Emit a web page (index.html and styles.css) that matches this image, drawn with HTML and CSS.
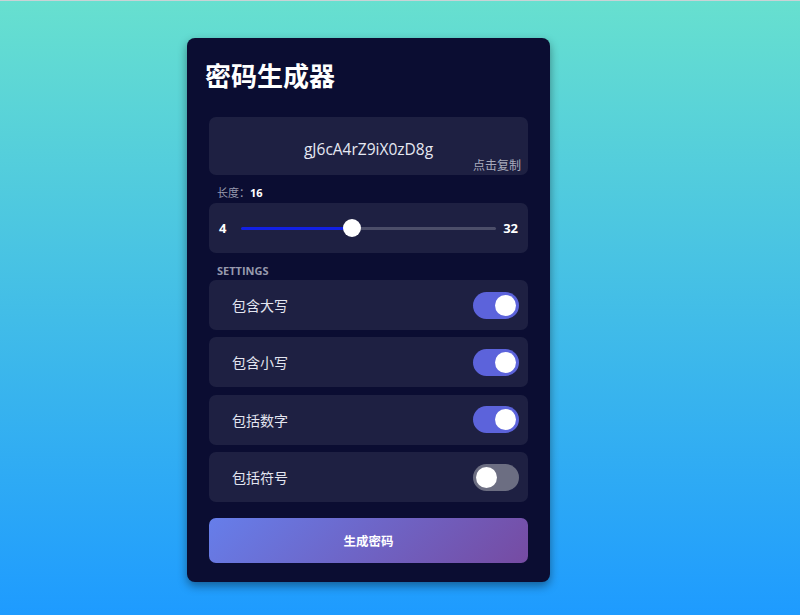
FILE: index.html
```html
<!DOCTYPE html>
<html lang="zh-CN">
<head>
  <meta charset="UTF-8" />
  <meta name="viewport" content="width=device-width, initial-scale=1.0"/>
  <title>密码生成器</title>
  <link rel="stylesheet" href="styles.css">
</head>
<body>
  <div class="page">
    <div class="card">
      <h1>密码生成器</h1>

      <div class="result">
        <span id="password">gJ6cA4rZ9iX0zD8g</span>
        <span class="copy">点击复制</span>
      </div>

      <div class="label">长度：<b id="lenValue">16</b></div>
      <div class="panel slider">
        <span class="min">4</span>
        <input type="range" id="length" min="4" max="32" value="16" style="--fill: 43%">
        <span class="max">32</span>
      </div>

      <div class="label caps">SETTINGS</div>
      <div class="options">
        <div class="panel option">
          <span>包含大写</span>
          <label class="switch"><input type="checkbox" checked><i></i></label>
        </div>
        <div class="panel option">
          <span>包含小写</span>
          <label class="switch"><input type="checkbox" checked><i></i></label>
        </div>
        <div class="panel option">
          <span>包括数字</span>
          <label class="switch"><input type="checkbox" checked><i></i></label>
        </div>
        <div class="panel option">
          <span>包括符号</span>
          <label class="switch"><input type="checkbox"><i></i></label>
        </div>
      </div>

      <button class="generate">生成密码</button>
    </div>
  </div>
</body>
</html>
```

FILE: styles.css
```css
* {
  box-sizing: border-box;
}
body {
  margin: 0;
  height: 615px;
  border-top: 1px solid #c9d3d6;
  background: linear-gradient(to bottom, #67e0cf, #1e9bff);
  font-family: "Noto Sans CJK SC", "Noto Sans", sans-serif;
  color: #fff;
  overflow: hidden;
}
.page {
  padding: 37px 0 0 187px;
}
.card {
  width: 363px;
  padding: 22px 22px 19px;
  background: #0b0d32;
  border-radius: 8px;
  box-shadow: 0 4px 10px rgba(0, 0, 0, 0.4);
}
h1 {
  margin: -1px 0 26px -4px;
  font-size: 26px;
  line-height: 32px;
  font-weight: 700;
}
.panel {
  background: #1e2042;
  border-radius: 7px;
}
.result {
  position: relative;
  height: 58px;
  padding-top: 5px;
  display: flex;
  align-items: center;
  justify-content: center;
  background: #1e2042;
  border-radius: 7px;
  font-family: "Open Sans", sans-serif;
  font-size: 15.5px;
  color: #e6e8f2;
  cursor: pointer;
}
.copy {
  position: absolute;
  right: 7px;
  bottom: 2px;
  font-family: "Noto Sans CJK SC", sans-serif;
  font-size: 12px;
  color: #a9abbc;
}
.label {
  margin: 9px 0 2px 8px;
  font-size: 11px;
  line-height: 16px;
  color: #9799ad;
}
.label b {
  color: #fff;
  font-family: "Open Sans", sans-serif;
}
.caps {
  margin-top: 10px;
  margin-bottom: 1px;
  font-family: "Open Sans", sans-serif;
  font-weight: 700;
}
.slider {
  height: 50px;
  display: flex;
  align-items: center;
  padding: 0 10px;
  font-family: "Open Sans", sans-serif;
  font-size: 13px;
  font-weight: 700;
}
.slider .min {
  margin-right: 15px;
}
.slider .max {
  margin-left: 7px;
}
input[type="range"] {
  -webkit-appearance: none;
  appearance: none;
  flex: 1;
  height: 18px;
  margin: 0;
  background: transparent;
}
input[type="range"]::-webkit-slider-runnable-track {
  height: 3px;
  border-radius: 2px;
  background: linear-gradient(to right, #1220e4 var(--fill), #4c4e69 var(--fill));
}
input[type="range"]::-webkit-slider-thumb {
  -webkit-appearance: none;
  width: 18px;
  height: 18px;
  margin-top: -7.5px;
  border-radius: 50%;
  background: #fff;
}
.options {
  display: flex;
  flex-direction: column;
  gap: 7.4px;
}
.option {
  height: 50px;
  display: flex;
  align-items: center;
  justify-content: space-between;
  padding: 0 9px 0 23px;
  font-size: 14px;
  color: #e3e5f0;
}
.switch {
  position: relative;
  width: 46px;
  height: 27px;
}
.switch input {
  display: none;
}
.switch i {
  position: absolute;
  inset: 0;
  border-radius: 14px;
  background: #6c6e82;
}
.switch i::after {
  content: "";
  position: absolute;
  top: 3px;
  left: 3px;
  width: 21px;
  height: 21px;
  border-radius: 50%;
  background: #fff;
}
.switch input:checked + i {
  background: #5c63db;
}
.switch input:checked + i::after {
  left: 22px;
}
.generate {
  display: block;
  width: 100%;
  height: 45px;
  margin-top: 16px;
  border: none;
  border-radius: 7px;
  background: linear-gradient(135deg, #667eea, #764ba2);
  color: #fff;
  font-family: "Noto Sans CJK SC", sans-serif;
  font-size: 12.5px;
  font-weight: 700;
  cursor: pointer;
}
```
